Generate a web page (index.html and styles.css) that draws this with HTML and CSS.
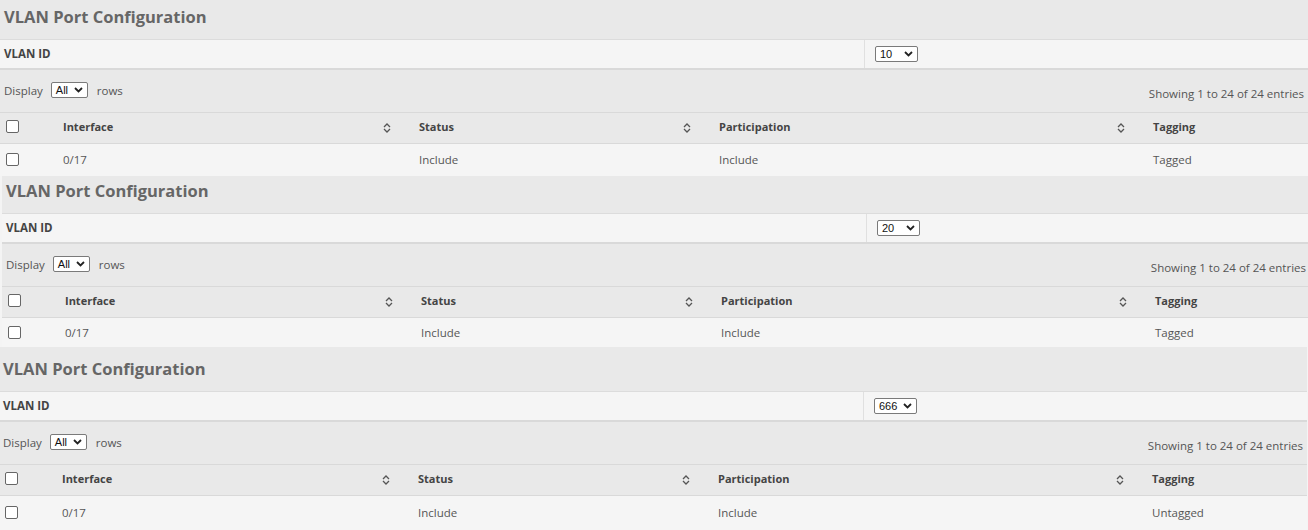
FILE: index.html
```html
<!DOCTYPE html>
<html lang="en">
<head>
  <meta charset="UTF-8">
  <meta name="viewport" content="width=device-width, initial-scale=1.0">
  <title>VLAN Port Configuration</title>
  <link rel="stylesheet" href="styles.css">
</head>
<body>
  <section class="panel panel-first">
    <h2 class="panel-title">VLAN Port Configuration</h2>
    <div class="vlan-row">
      <div class="vlan-label">VLAN ID</div>
      <div class="vlan-value">
        <span class="pick pick-vlan"><span>10</span><svg width="9" height="6" viewBox="0 0 9 6"><path d="M1 1l3.5 3.5L8 1" fill="none" stroke="#222" stroke-width="1.8"/></svg></span>
      </div>
    </div>
    <div class="tools">
      <div class="length">Display <span class="pick pick-len"><span>All</span><svg width="9" height="6" viewBox="0 0 9 6"><path d="M1 1l3.5 3.5L8 1" fill="none" stroke="#222" stroke-width="1.8"/></svg></span> rows</div>
      <div class="info">Showing 1 to 24 of 24 entries</div>
    </div>
    <table class="ports">
      <thead>
        <tr>
          <th class="col-check"><input type="checkbox"></th>
          <th class="col-if">Interface <svg class="sort" width="8" height="10" viewBox="0 0 8 10"><path d="M1 4l3-3 3 3M1 6l3 3 3-3" fill="none" stroke="#555" stroke-width="1.3"/></svg></th>
          <th class="col-status">Status <svg class="sort" width="8" height="10" viewBox="0 0 8 10"><path d="M1 4l3-3 3 3M1 6l3 3 3-3" fill="none" stroke="#555" stroke-width="1.3"/></svg></th>
          <th class="col-part">Participation <svg class="sort" width="8" height="10" viewBox="0 0 8 10"><path d="M1 4l3-3 3 3M1 6l3 3 3-3" fill="none" stroke="#555" stroke-width="1.3"/></svg></th>
          <th class="col-tag">Tagging</th>
        </tr>
      </thead>
      <tbody>
        <tr>
          <td class="col-check"><input type="checkbox"></td>
          <td>0/17</td>
          <td>Include</td>
          <td>Include</td>
          <td>Tagged</td>
        </tr>
      </tbody>
    </table>
  </section>

  <section class="panel panel-second">
    <h2 class="panel-title">VLAN Port Configuration</h2>
    <div class="vlan-row">
      <div class="vlan-label">VLAN ID</div>
      <div class="vlan-value">
        <span class="pick pick-vlan"><span>20</span><svg width="9" height="6" viewBox="0 0 9 6"><path d="M1 1l3.5 3.5L8 1" fill="none" stroke="#222" stroke-width="1.8"/></svg></span>
      </div>
    </div>
    <div class="tools">
      <div class="length">Display <span class="pick pick-len"><span>All</span><svg width="9" height="6" viewBox="0 0 9 6"><path d="M1 1l3.5 3.5L8 1" fill="none" stroke="#222" stroke-width="1.8"/></svg></span> rows</div>
      <div class="info">Showing 1 to 24 of 24 entries</div>
    </div>
    <table class="ports">
      <thead>
        <tr>
          <th class="col-check"><input type="checkbox"></th>
          <th class="col-if">Interface <svg class="sort" width="8" height="10" viewBox="0 0 8 10"><path d="M1 4l3-3 3 3M1 6l3 3 3-3" fill="none" stroke="#555" stroke-width="1.3"/></svg></th>
          <th class="col-status">Status <svg class="sort" width="8" height="10" viewBox="0 0 8 10"><path d="M1 4l3-3 3 3M1 6l3 3 3-3" fill="none" stroke="#555" stroke-width="1.3"/></svg></th>
          <th class="col-part">Participation <svg class="sort" width="8" height="10" viewBox="0 0 8 10"><path d="M1 4l3-3 3 3M1 6l3 3 3-3" fill="none" stroke="#555" stroke-width="1.3"/></svg></th>
          <th class="col-tag">Tagging</th>
        </tr>
      </thead>
      <tbody>
        <tr>
          <td class="col-check"><input type="checkbox"></td>
          <td>0/17</td>
          <td>Include</td>
          <td>Include</td>
          <td>Tagged</td>
        </tr>
      </tbody>
    </table>
  </section>

  <section class="panel panel-third">
    <h2 class="panel-title">VLAN Port Configuration</h2>
    <div class="vlan-row">
      <div class="vlan-label">VLAN ID</div>
      <div class="vlan-value">
        <span class="pick pick-vlan"><span>666</span><svg width="9" height="6" viewBox="0 0 9 6"><path d="M1 1l3.5 3.5L8 1" fill="none" stroke="#222" stroke-width="1.8"/></svg></span>
      </div>
    </div>
    <div class="tools">
      <div class="length">Display <span class="pick pick-len"><span>All</span><svg width="9" height="6" viewBox="0 0 9 6"><path d="M1 1l3.5 3.5L8 1" fill="none" stroke="#222" stroke-width="1.8"/></svg></span> rows</div>
      <div class="info">Showing 1 to 24 of 24 entries</div>
    </div>
    <table class="ports">
      <thead>
        <tr>
          <th class="col-check"><input type="checkbox"></th>
          <th class="col-if">Interface <svg class="sort" width="8" height="10" viewBox="0 0 8 10"><path d="M1 4l3-3 3 3M1 6l3 3 3-3" fill="none" stroke="#555" stroke-width="1.3"/></svg></th>
          <th class="col-status">Status <svg class="sort" width="8" height="10" viewBox="0 0 8 10"><path d="M1 4l3-3 3 3M1 6l3 3 3-3" fill="none" stroke="#555" stroke-width="1.3"/></svg></th>
          <th class="col-part">Participation <svg class="sort" width="8" height="10" viewBox="0 0 8 10"><path d="M1 4l3-3 3 3M1 6l3 3 3-3" fill="none" stroke="#555" stroke-width="1.3"/></svg></th>
          <th class="col-tag">Tagging</th>
        </tr>
      </thead>
      <tbody>
        <tr>
          <td class="col-check"><input type="checkbox"></td>
          <td>0/17</td>
          <td>Include</td>
          <td>Include</td>
          <td>Untagged</td>
        </tr>
      </tbody>
    </table>
  </section>
</body>
</html>
```

FILE: styles.css
```css
body {
  font-family: "Open Sans", "Noto Sans", sans-serif;
  margin: 0;
  background-color: #f4f4f4;
  color: #555;
  font-size: 11.5px;
  overflow: hidden;
}
.panel {
  width: 1308px;
}
.panel-second {
  margin-left: 2px;
}
.panel-third {
  margin-left: -1px;
}
.panel-title {
  margin: 0;
  padding: 0 4px;
  height: 39px;
  line-height: 34px;
  font-size: 16.5px;
  font-weight: bold;
  color: #666;
  background-color: #e9e9e9;
  border-bottom: 1px solid #dcdcdc;
}
.panel-second .panel-title {
  height: 37px;
  line-height: 30px;
}
.panel-third .panel-title {
  height: 44px;
  line-height: 44px;
}
.vlan-row {
  display: flex;
  height: 28px;
  background-color: #f5f5f5;
  border-bottom: 2px solid #d9d9d9;
}
.vlan-label {
  width: 860px;
  padding: 0 0 2px 4px;
  display: flex;
  align-items: center;
  font-size: 11.5px;
  font-weight: bold;
  color: #444;
  border-right: 1px solid #e0e0e0;
}
.vlan-value {
  display: flex;
  align-items: center;
  padding-left: 10px;
}
.pick {
  display: inline-flex;
  align-items: center;
  justify-content: space-between;
  box-sizing: border-box;
  height: 16px;
  padding: 0 4px 0 4px;
  background-color: #fff;
  border: 1px solid #7a7a7a;
  border-radius: 2px;
  color: #111;
  font-family: "Liberation Sans", Arial, sans-serif;
  font-size: 11px;
  vertical-align: middle;
}
.pick-vlan {
  width: 43px;
}
.pick-len {
  width: 37px;
  margin: 0 9px 0 8px;
}
.tools {
  display: flex;
  justify-content: space-between;
  height: 42px;
  padding: 0 4px;
  background-color: #e9e9e9;
}
.length {
  display: flex;
  align-items: center;
  margin-top: -2px;
}
.info {
  display: flex;
  align-items: center;
  padding-top: 5px;
}
.ports {
  width: 1308px;
  border-collapse: collapse;
  table-layout: fixed;
}
.ports th, .ports td {
  padding: 0 13px;
  text-align: left;
  white-space: nowrap;
}
.ports th {
  position: relative;
  height: 27px;
  padding-bottom: 3px;
  background-color: #e9e9e9;
  border-top: 1px solid #d9d9d9;
  border-bottom: 1px solid #d9d9d9;
  font-size: 11px;
  font-weight: bold;
  color: #444;
}
.ports td {
  height: 30px;
  padding-bottom: 2px;
  background-color: #f5f5f5;
}
.panel-second .ports td {
  height: 29px;
  padding-bottom: 0;
}
.panel-third .ports td {
  height: 33px;
  padding-bottom: 1px;
}
.ports .col-check {
  width: 50px;
  padding-left: 6px;
  padding-right: 0;
  box-sizing: border-box;
}
.col-if {
  width: 330px;
}
.col-status {
  width: 274px;
}
.col-part {
  width: 408px;
}
.ports input[type="checkbox"] {
  appearance: none;
  display: block;
  width: 13px;
  height: 13px;
  margin: 0;
  background-color: #fff;
  border: 1px solid #666;
  border-radius: 2px;
}
.sort {
  position: absolute;
  right: 15px;
  top: 10px;
}
```
